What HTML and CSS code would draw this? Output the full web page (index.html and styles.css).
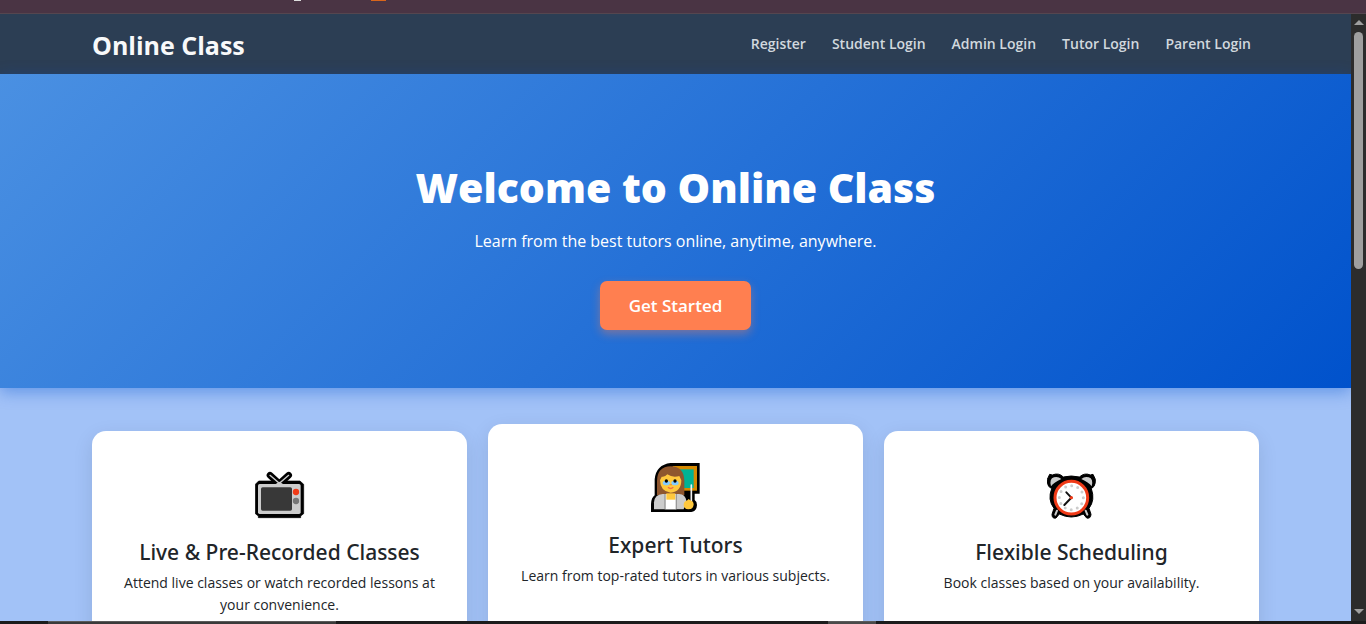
FILE: index.html
```html
<!DOCTYPE html>
<html lang="en">
<head>
<meta charset="utf-8">
<title>Online Class</title>
<link rel="stylesheet" href="styles.css">
</head>
<body>
<div class="browser-strip"><span class="tab-mark"></span><span class="tab-mark tab-mark-orange"></span></div>
<div class="window">
  <div class="page">
    <header class="navbar">
      <div class="container navbar-inner">
        <a class="brand" href="#">Online Class</a>
        <nav class="nav-links">
          <a href="#">Register</a>
          <a href="#">Student Login</a>
          <a href="#">Admin Login</a>
          <a href="#">Tutor Login</a>
          <a href="#">Parent Login</a>
        </nav>
      </div>
    </header>
    <section class="hero">
      <h1>Welcome to Online Class</h1>
      <p>Learn from the best tutors online, anytime, anywhere.</p>
      <a class="btn" href="#">Get Started</a>
    </section>
    <main class="container features">
      <article class="card">
        <svg class="icon" viewBox="45 29 150 150" aria-hidden="true">
          <path d="M90 45 L118 70 L146 45" fill="none" stroke="#000" stroke-width="20" stroke-linecap="round" stroke-linejoin="round"/>
          <path d="M56 62 H180 L191 72 V160 L182 167 V172 H55 V167 L46 160 V72 Z" fill="#000" stroke="#000" stroke-width="2" stroke-linejoin="round"/>
          <path d="M90 45 L118 69 L146 45" fill="none" stroke="#ccc" stroke-width="4" stroke-linecap="round"/>
          <rect x="54" y="71" width="128" height="90" rx="5" fill="#ccc"/>
          <path d="M107 71 L118 64 L129 71Z" fill="#ccc"/>
          <rect x="63" y="81" width="93" height="70" rx="5" fill="#383838"/>
          <circle cx="168" cy="95" r="9.500" fill="#f03a17"/>
          <circle cx="168" cy="122" r="9.500" fill="#767676"/>
        </svg>
        <h2>Live &amp; Pre-Recorded Classes</h2>
        <p>Attend live classes or watch recorded lessons at your convenience.</p>
      </article>
      <article class="card card-raised">
        <svg class="icon" viewBox="45 39 150 150" aria-hidden="true">
          <path d="M104 39 H191 V131 H176 V150 Q183 154 183 165 Q182 184 166 186 H45 V162 Q46 143 56 136 V88 Q60 44 104 39Z" fill="#000"/>
          <rect x="110" y="48" width="73" height="74" fill="#d68a00"/>
          <rect x="110" y="58" width="63" height="56" fill="#00b294"/>
          <path d="M63 136 V92 Q64 50 104 49 Q144 50 145 92 V136Z" fill="#8e562e"/>
          <path d="M72 91 L77 80 Q87 82 94 73 Q110 84 130 78 L136 91 Q136 125 104 128 Q73 125 72 91Z" fill="#ffc83d"/>
          <ellipse cx="91" cy="99" rx="11" ry="7" fill="#83cbff"/>
          <ellipse cx="117" cy="99" rx="11" ry="7" fill="#83cbff"/>
          <circle cx="91" cy="93" r="5" fill="#000"/><circle cx="117" cy="93" r="5" fill="#000"/>
          <path d="M101 104 H108" stroke="#f29a32" stroke-width="4"/>
          <path d="M96 112 Q104 119 112 112" fill="none" stroke="#f06b44" stroke-width="4"/>
          <path d="M54 178 V157 Q56 133 80 132 H129 Q148 133 151 152 L143 178Z" fill="#ccc"/>
          <path d="M88 132 H120 V178 H88Z" fill="#fff"/>
          <path d="M91 130 H118 V149 H91Z" fill="#ffc83d"/>
          <path d="M87 132 V178 M121 132 V178" stroke="#999" stroke-width="4"/>
          <path d="M166 105 V158" stroke="#f2f2f2" stroke-width="5" stroke-linecap="round"/>
          <path d="M143 164 Q144 154 154 151 L158 147 L163 151 Q173 154 173 164 Q171 178 157 178 Q143 177 143 164Z" fill="#ffc83d"/>
        </svg>
        <h2>Expert Tutors</h2>
        <p>Learn from top-rated tutors in various subjects.</p>
      </article>
      <article class="card">
        <svg class="icon" viewBox="45 30 150 150" aria-hidden="true">
          <path d="M50 79 Q45 70 46 58 L53 43 L61 45 Q80 37 94 51 Q118 45 142 51 Q158 37 175 45 L183 43 L190 58 Q191 70 186 79 L178 86 Q190 120 171 145 L177 163 Q176 177 164 174 L154 162 Q118 180 82 162 L72 174 Q60 177 60 163 L66 145 Q46 119 59 86Z" fill="#000" stroke="#000" stroke-width="3" stroke-linejoin="round"/>
          <path d="M57 79 Q51 56 66 52 Q78 48 88 57 Q66 67 57 79Z M179 79 Q185 56 170 52 Q158 48 148 57 Q170 67 179 79Z" fill="#ccc"/>
          <path d="M75 152 L70 164 M161 152 L166 164" stroke="#ccc" stroke-width="6" stroke-linecap="round"/>
          <circle cx="118" cy="113" r="49" fill="#fff" stroke="#f03a17" stroke-width="9"/>
          <circle cx="118" cy="113" r="36" fill="none" stroke="#ccc" stroke-width="9" stroke-linecap="round" stroke-dasharray="0 18.850"/>
          <path d="M103 97 L118 113 L97 135" fill="none" stroke="#111" stroke-width="6" stroke-linecap="round"/>
          <circle cx="118" cy="113" r="5" fill="#f03a17"/>
        </svg>
        <h2>Flexible Scheduling</h2>
        <p>Book classes based on your availability.</p>
      </article>
    </main>
  </div>
  <div class="scrollbar" aria-hidden="true">
    <span class="arrow arrow-up"></span>
    <span class="track"><span class="thumb"></span></span>
    <span class="arrow arrow-down"></span>
  </div>
</div>
<div class="taskbar"><span class="task"></span><span class="task task-small"></span></div>
</body>
</html>
```
FILE: styles.css
```css
* { box-sizing: border-box; }
body {
  margin: 0;
  height: 100vh;
  display: flex;
  flex-direction: column;
  overflow: hidden;
  font-family: "Open Sans", "Noto Sans", sans-serif;
  color: #212529;
}
a { text-decoration: none; }
h1, h2, p { margin: 0; }

.browser-strip {
  flex: none;
  display: flex;
  gap: 70px;
  height: 14px;
  padding-left: 294px;
  background: #4a3444;
  border-bottom: 1px solid #55464f;
}
.tab-mark { width: 7px; height: 1px; background: #ddd; }
.tab-mark-orange { width: 15px; background: #d9651b; }

.window { flex: 1; min-height: 0; display: flex; }
.page { flex: 1; min-width: 0; overflow: hidden; background: #a2c2f7; }
.container { width: 100%; max-width: 1351px; margin: 0 auto; padding: 0 92px; }

.navbar { background: #2c3e54; }
.navbar-inner { display: flex; align-items: center; justify-content: space-between; height: 60px; }
.brand { font-size: 25px; font-weight: 700; line-height: 32px; color: #f8f9fa; padding-top: 2px; }
.nav-links { display: flex; gap: 26px; padding-right: 8px; }
.nav-links a { font-size: 14px; font-weight: 600; line-height: 22px; color: #d1d8de; }

.hero {
  position: relative;
  display: flex;
  flex-direction: column;
  align-items: center;
  padding: 85px 24px 58px;
  text-align: center;
  color: #fff;
  background: linear-gradient(135deg, #4a90e2, #0052cc);
  box-shadow: 0 4px 15px rgba(0, 82, 204, 0.4);
}
.hero h1 { font-size: 41px; font-weight: 800; line-height: 56px; }
.hero p { margin: 13px 0 27px; font-size: 16px; line-height: 26px; }
.btn {
  padding: 12px 29px;
  border-radius: 7px;
  background: #ff7f50;
  box-shadow: 0 4px 10px rgba(255, 127, 80, 0.4);
  color: #fff;
  font-size: 17px;
  font-weight: 600;
  line-height: 25px;
}

.features { display: grid; grid-template-columns: repeat(3, 1fr); gap: 21px; padding-top: 43px; }
.card {
  min-height: 260px;
  padding: 39px 28px;
  border-radius: 14px;
  background: #fff;
  box-shadow: 0 6px 20px rgba(0, 0, 0, 0.1);
  text-align: center;
}
.card-raised { transform: translateY(-7px); }
.icon { display: block; width: 50px; height: 50px; margin: 0 auto 18px; }
.card h2 { font-family: "Noto Sans", sans-serif; font-size: 21px; font-weight: 500; line-height: 28px; }
.card p { margin-top: 6px; font-size: 14px; line-height: 22px; }

.scrollbar {
  flex: none;
  display: flex;
  flex-direction: column;
  align-items: center;
  width: 15px;
  padding: 6px 0 7px;
  background: #2c2c2c;
}
.arrow { border: 5px solid transparent; border-top-width: 0; }
.arrow-up { border-bottom: 5px solid #9f9f9f; }
.arrow-down { border-top: 5px solid #9f9f9f; border-bottom-width: 0; }
.track { flex: 1; padding-top: 7px; }
.thumb { display: block; width: 9px; height: 41%; border-radius: 5px; background: #9f9f9f; }

.taskbar { flex: none; display: flex; gap: 492px; height: 3px; padding-left: 48px; background: #1c1c1c; }
.task { width: 288px; background: #3a3a3a; border-top: 1px solid #5a5a5a; }
.task-small { width: 48px; background: #4a4a4a; }
```
